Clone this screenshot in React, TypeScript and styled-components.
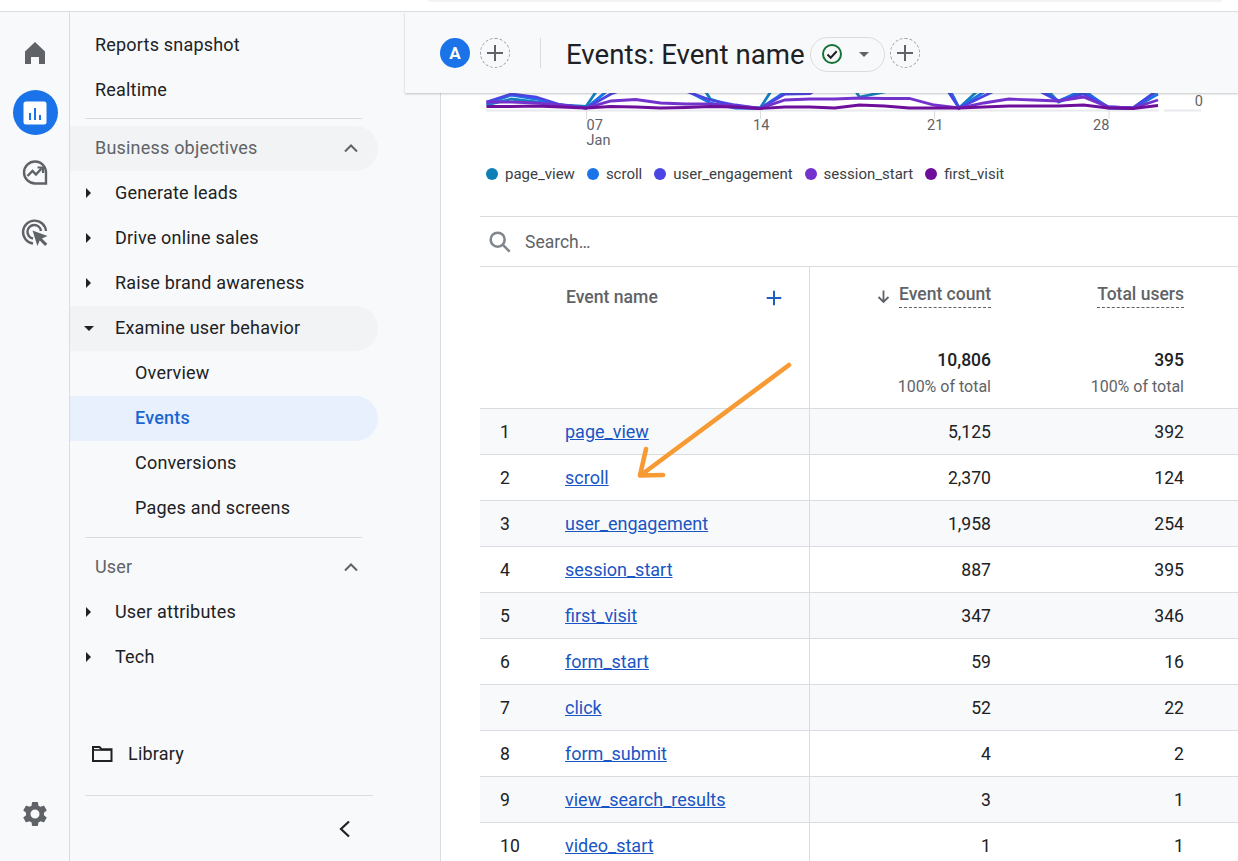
import React from "react";
import styled, { createGlobalStyle } from "styled-components";

const Global = createGlobalStyle`
  html, body { margin: 0; padding: 0; height: 100%; overflow: hidden; background: #fff; }
  body { font-family: Roboto, "Liberation Sans", sans-serif; color: #202124; }
  * { box-sizing: border-box; }
`;

const Page = styled.div`
  width: 100vw;
  height: 100vh;
  display: flex;
  flex-direction: column;
  overflow: hidden;
`;
const TopStrip = styled.div`
  height: 12px;
  flex: none;
  padding: 0 16px 0 428px;
  border-bottom: 1px solid #dadce0;
  background: #fff;
`;
const TopSearch = styled.div`
  height: 2px;
  background: #f1f3f4;
  border-radius: 0 0 4px 4px;
`;
const Body = styled.div`
  flex: 1;
  display: flex;
  min-height: 0;
  overflow: hidden;
`;
const Rail = styled.nav`
  width: 70px;
  flex: none;
  background: #f8f9fa;
  border-right: 1px solid #dadce0;
  display: flex;
  flex-direction: column;
  align-items: center;
  padding-top: 18px;
  padding-left: 1px;
`;
const RailSlot = styled.div<{ $active?: boolean }>`
  width: 45px;
  height: 45px;
  margin-bottom: 15px;
  display: flex;
  align-items: center;
  justify-content: center;
  border-radius: 50%;
  background: ${(p) => (p.$active ? "#1a73e8" : "transparent")};
`;
const RailSpacer = styled.div`
  flex: 1;
`;
const RailBottom = styled.div`
  height: 45px;
  margin-bottom: 25px;
  display: flex;
  align-items: center;
`;
const Sidebar = styled.aside`
  width: 371px;
  flex: none;
  background: #f8f9fa;
  border-right: 1px solid #dadce0;
  padding-top: 11px;
  padding-right: 62px;
  display: flex;
  flex-direction: column;
`;
const NavRow = styled.div<{ $depth?: number; $pill?: "grey" | "blue"; $muted?: boolean }>`
  height: 45px;
  flex: none;
  display: flex;
  align-items: center;
  position: relative;
  padding: 0 20px 2px ${(p) => 25 + (p.$depth ?? 0) * 20}px;
  font-size: 18px;
  letter-spacing: 0.2px;
  color: ${(p) => (p.$pill === "blue" ? "#1a67d2" : p.$muted ? "#5f6368" : "#202124")};
  font-weight: ${(p) => (p.$pill === "blue" ? 500 : 400)};
  border-radius: 0 23px 23px 0;
  width: 308px;
  background: ${(p) => (p.$pill === "grey" ? "#f1f3f4" : p.$pill === "blue" ? "#e8f0fe" : "transparent")};
`;
const Caret = styled.span<{ $open?: boolean }>`
  position: absolute;
  left: 16px;
  top: 50%;
  width: 0;
  height: 0;
  ${(p) =>
    p.$open
      ? `margin-top:-3px;margin-left:-2px;border-left:5px solid transparent;border-right:5px solid transparent;border-top:5px solid #202124;`
      : `margin-top:-6px;border-top:5px solid transparent;border-bottom:5px solid transparent;border-left:5px solid #202124;`}
`;
const Chevron = styled.svg`
  margin-left: auto;
  margin-right: -1px;
`;
const NavDivider = styled.div`
  height: 1px;
  flex: none;
  background: #dadce0;
  margin: 5px 0 7px 15px;
  width: 277px;
`;
const SectionDivider = styled(NavDivider)`
  margin: 6px 0 7px 15px;
`;
const WideDivider = styled(NavDivider)`
  margin: 18px 0 0 15px;
  width: 288px;
`;
const LibraryRow = styled.div`
  height: 45px;
  flex: none;
  margin-top: 52px;
  padding: 0 0 2px 21px;
  display: flex;
  align-items: center;
  gap: 15px;
  font-size: 18px;
  letter-spacing: 0.2px;
`;
const BottomRow = styled.div`
  width: 288px;
  margin-left: 15px;
  display: flex;
  justify-content: flex-end;
  padding: 23px 21px 0 0;
`;
const Main = styled.main`
  flex: 1;
  min-width: 0;
  position: relative;
  background: #fff;
  display: flex;
  flex-direction: column;
`;
const Header = styled.header`
  height: 81px;
  flex: none;
  margin-left: -36px;
  padding-left: 35px;
  position: relative;
  z-index: 2;
  background: #f8f9fa;
  box-shadow: 0 1px 2px rgba(60, 64, 67, 0.3);
  display: flex;
  align-items: center;
`;
const Avatar = styled.div`
  width: 30px;
  height: 30px;
  flex: none;
  margin-right: 10px;
  border-radius: 50%;
  background: #1a73e8;
  color: #fff;
  font-weight: 700;
  font-size: 17px;
  display: flex;
  align-items: center;
  justify-content: center;
`;
const AddCircle = styled.div`
  width: 30px;
  height: 30px;
  border-radius: 50%;
  border: 1px dashed #9aa0a6;
  display: flex;
  align-items: center;
  justify-content: center;
  flex: none;
`;
const VSep = styled.div`
  width: 1px;
  height: 30px;
  flex: none;
  background: #dadce0;
  margin: 0 25px 0 30px;
`;
const Title = styled.h1`
  margin: 3px 5px 0 0;
  font-size: 27.6px;
  font-weight: 400;
  color: #202124;
  white-space: nowrap;
`;
const Chip = styled.div`
  width: 75px;
  height: 35px;
  flex: none;
  margin: 3px 5px 0 0;
  border: 1px solid #dadce0;
  border-radius: 18px;
  display: flex;
  align-items: center;
  padding-left: 10px;
  gap: 16px;
`;
const ChipCaret = styled.span`
  width: 0;
  height: 0;
  border-left: 5.5px solid transparent;
  border-right: 5.5px solid transparent;
  border-top: 5.5px solid #5f6368;
`;
const ChartBlock = styled.section`
  height: 123px;
  flex: none;
  position: relative;
  display: flex;
  flex-direction: column;
`;
const ChartSvg = styled.svg`
  display: block;
  flex: none;
  font-family: Roboto, "Liberation Sans", sans-serif;
`;
const Legend = styled.div`
  display: flex;
  align-items: center;
  padding-left: 45px;
  margin-top: 9px;
  font-size: 15px;
  color: #3c4043;
`;
const LegendItem = styled.div`
  display: flex;
  align-items: center;
  gap: 7px;
  margin-right: 12px;
`;
const Dot = styled.span<{ $c: string }>`
  width: 12px;
  height: 12px;
  border-radius: 50%;
  background: ${(p) => p.$c};
`;
const TableWrap = styled.section`
  margin-left: 39px;
  border-top: 1px solid #dadce0;
  flex: none;
`;
const SearchRow = styled.div`
  height: 50px;
  display: flex;
  align-items: center;
  gap: 11px;
  padding-left: 6px;
  border-bottom: 1px solid #dadce0;
  font-size: 17.5px;
  color: #5f6368;
`;
const grid = `
  display: grid;
  grid-template-columns: 85px 245px 193px 193px 1fr;
`;
const HeadRow = styled.div`
  ${grid}
  height: 142px;
  border-bottom: 1px solid #dadce0;
`;
const HeadName = styled.div`
  border-right: 1px solid #dadce0;
  display: flex;
  justify-content: space-between;
  padding: 21px 25px 0 1px;
  font-size: 17.6px;
  font-weight: 500;
  color: #5f6368;
  align-items: flex-start;
  line-height: 19px;
`;
const HeadMetric = styled.div`
  display: flex;
  flex-direction: column;
  align-items: flex-end;
  padding: 18px 12px 0 0;
`;
const MetricTitle = styled.div`
  display: flex;
  align-items: center;
  gap: 7px;
  font-size: 17.5px;
  font-weight: 500;
  color: #5f6368;
`;
const Dashed = styled.span`
  border-bottom: 1px dashed #5f6368;
  line-height: 19px;
  padding-bottom: 3px;
`;
const Total = styled.div`
  margin-top: 42px;
  font-size: 17.5px;
  font-weight: 500;
  color: #202124;
  line-height: 20px;
`;
const TotalSub = styled.div`
  margin-top: 7px;
  font-size: 16px;
  color: #5f6368;
  line-height: 20px;
`;
const Row = styled.div<{ $odd: boolean }>`
  ${grid}
  height: 46px;
  border-bottom: 1px solid #dadce0;
  background: ${(p) => (p.$odd ? "#f8f9fa" : "#fff")};
  align-items: center;
  font-size: 17.6px;
  color: #202124;
`;
const RowIdx = styled.div`
  padding-left: 20px;
`;
const RowName = styled.div`
  height: 100%;
  display: flex;
  align-items: center;
  border-right: 1px solid #dadce0;
`;
const EventLink = styled.a`
  color: #1a55c4;
  text-decoration: underline;
  font-size: 18px;
`;
const Num = styled.div`
  text-align: right;
  padding-right: 12px;
`;
const ArrowOverlay = styled.svg`
  position: absolute;
  left: 0;
  top: 0;
  pointer-events: none;
  z-index: 1;
`;

const X = (i: number) => 486.5 + 24.87 * i;
const toPts = (a: number[]) => a.map((y, i) => `${X(i).toFixed(1)},${y}`).join(" ");

const series: [string, number[]][] = [
  ["#1380bd", [105, 99, 102, 105, 106.5, 70, 70, 60, 60, 99, 107, 108, 70, 60, 60, 97, 92, 60, 60, 108, 85, 70, 75, 102, 92, 107, 108, 90]],
  ["#1a73e8", [104, 95, 99, 105, 108, 88, 70, 60, 90, 103, 108, 108.5, 92, 80, 70, 70, 70, 60, 60, 108, 92, 85, 85, 101, 90, 108, 108.5, 94]],
  ["#4b45e4", [102, 94, 97, 105, 108, 94, 85, 85, 91, 100, 105, 108.5, 94, 93.5, 80, 70, 70, 60, 70, 108, 96, 84, 88, 101, 94, 107, 108, 90]],
  ["#7432cc", [102, 102, 103, 105, 108, 101, 99.5, 103, 104, 104, 106, 108.5, 100, 99, 99, 98, 98.5, 98.5, 105, 108, 103, 99, 100, 101, 97, 107, 108, 100]],
  ["#6e0f9c", [106.5, 106.5, 106, 107, 108, 106.5, 107, 108, 107.5, 106.5, 107, 108.5, 107, 107, 108, 105, 106, 108, 108, 108, 107, 106, 106, 106, 105, 108, 108.5, 105.5]],
];
const legend: [string, string][] = [
  ["page_view", "#0f7fb8"],
  ["scroll", "#1a73e8"],
  ["user_engagement", "#4b45e4"],
  ["session_start", "#7432cc"],
  ["first_visit", "#6e0f9c"],
];
const rows: [string, string, string][] = [
  ["page_view", "5,125", "392"],
  ["scroll", "2,370", "124"],
  ["user_engagement", "1,958", "254"],
  ["session_start", "887", "395"],
  ["first_visit", "347", "346"],
  ["form_start", "59", "16"],
  ["click", "52", "22"],
  ["form_submit", "4", "2"],
  ["view_search_results", "3", "1"],
  ["video_start", "1", "1"],
];

const Plus = ({ c = "#5f6368", s = 22, w = 2 }: { c?: string; s?: number; w?: number }) => (
  <svg width={s} height={s} viewBox="0 0 22 22">
    <path d="M11 3v16M3 11h16" stroke={c} strokeWidth={w} fill="none" />
  </svg>
);
const Up = () => (
  <Chevron width="16" height="10" viewBox="0 0 16 10">
    <path d="M2 8.5 8 2.5l6 6" stroke="#5f6368" strokeWidth="2" fill="none" />
  </Chevron>
);

export default function App() {
  return (
    <Page>
      <Global />
      <TopStrip>
        <TopSearch />
      </TopStrip>
      <Body>
        <Rail>
          <RailSlot>
            <svg width="22" height="24" viewBox="0 0 22 24">
              <path fill="#5f6368" d="M11 1 21 10.5V23h-6v-7H7v7H1V10.5z" />
            </svg>
          </RailSlot>
          <RailSlot $active>
            <svg width="26" height="26" viewBox="0 0 26 26">
              <rect x="1.5" y="1.5" width="23" height="23" rx="2.5" fill="#fff" />
              <path d="M8 13v7M13 8v12M18 15v5" stroke="#1a73e8" strokeWidth="2" fill="none" />
            </svg>
          </RailSlot>
          <RailSlot>
            <svg width="28" height="28" viewBox="0 0 28 28">
              <path d="M25 24.5h-11A11 11 0 1 1 25 14z" fill="none" stroke="#5f6368" strokeWidth="2.4" />
              <path d="M6.5 17l5-5 3.5 3.5 5.5-6" fill="none" stroke="#5f6368" strokeWidth="2.4" />
              <path d="M16.5 8.5h5.5v5.5" fill="none" stroke="#5f6368" strokeWidth="2.2" />
            </svg>
          </RailSlot>
          <RailSlot>
            <svg width="28" height="28" viewBox="0 0 28 28">
              <path d="M12 24.5A11.5 11.5 0 1 1 25 12" fill="none" stroke="#5f6368" strokeWidth="2.4" />
              <path d="M12 19.5A6.8 6.8 0 1 1 20 12" fill="none" stroke="#5f6368" strokeWidth="2.4" />
              <path fill="#5f6368" d="M11.5 11.5l15 5.5-5.6 2.4 5.4 5.4-2.2 2.2-5.4-5.4-2.3 5.5z" />
            </svg>
          </RailSlot>
          <RailSpacer />
          <RailBottom>
            <svg width="30" height="30" viewBox="0 0 24 24">
              <path
                fill="#5f6368"
                d="M19.14 12.94c.04-.3.06-.61.06-.94s-.02-.64-.07-.94l2.03-1.58a.49.49 0 0 0 .12-.61l-1.92-3.32a.49.49 0 0 0-.59-.22l-2.39.96c-.5-.38-1.03-.7-1.62-.94l-.36-2.54a.48.48 0 0 0-.48-.41h-3.84a.48.48 0 0 0-.47.41l-.36 2.54c-.59.24-1.13.57-1.62.94l-2.39-.96a.48.48 0 0 0-.59.22L2.74 8.87a.48.48 0 0 0 .12.61l2.03 1.58c-.05.3-.09.63-.09.94s.02.64.07.94l-2.03 1.58a.49.49 0 0 0-.12.61l1.92 3.32c.12.22.37.29.59.22l2.39-.96c.5.38 1.03.7 1.62.94l.36 2.54c.05.24.24.41.48.41h3.84c.24 0 .44-.17.47-.41l.36-2.54c.59-.24 1.13-.56 1.62-.94l2.39.96c.22.08.47 0 .59-.22l1.92-3.32a.48.48 0 0 0-.12-.61l-2.01-1.58zM12 15.6A3.6 3.6 0 1 1 12 8.4a3.6 3.6 0 0 1 0 7.2z"
              />
            </svg>
          </RailBottom>
        </Rail>
        <Sidebar>
          <NavRow>Reports snapshot</NavRow>
          <NavRow>Realtime</NavRow>
          <NavDivider />
          <NavRow $pill="grey" $muted>
            Business objectives
            <Up />
          </NavRow>
          <NavRow $depth={1}><Caret />Generate leads</NavRow>
          <NavRow $depth={1}><Caret />Drive online sales</NavRow>
          <NavRow $depth={1}><Caret />Raise brand awareness</NavRow>
          <NavRow $depth={1} $pill="grey"><Caret $open />Examine user behavior</NavRow>
          <NavRow $depth={2}>Overview</NavRow>
          <NavRow $depth={2} $pill="blue">Events</NavRow>
          <NavRow $depth={2}>Conversions</NavRow>
          <NavRow $depth={2}>Pages and screens</NavRow>
          <SectionDivider />
          <NavRow $muted>
            User
            <Up />
          </NavRow>
          <NavRow $depth={1}><Caret />User attributes</NavRow>
          <NavRow $depth={1}><Caret />Tech</NavRow>
          <LibraryRow>
            <svg width="22" height="18" viewBox="0 0 22 18">
              <path d="M2 2h6.5l2 2.2H20.5V16H2z" fill="none" stroke="#202124" strokeWidth="2" />
              <path d="M2 5h18.5" stroke="#202124" strokeWidth="1.6" />
            </svg>
            Library
          </LibraryRow>
          <WideDivider />
          <BottomRow>
            <svg width="14" height="20" viewBox="0 0 14 20">
              <path d="M11 2.5 3 10l8 7.5" stroke="#202124" strokeWidth="2.2" fill="none" />
            </svg>
          </BottomRow>
        </Sidebar>
        <Main>
          <Header>
            <Avatar>A</Avatar>
            <AddCircle><Plus /></AddCircle>
            <VSep />
            <Title>Events: Event name</Title>
            <Chip>
              <svg width="22" height="22" viewBox="0 0 22 22">
                <circle cx="11" cy="11" r="9" fill="none" stroke="#137333" strokeWidth="2" />
                <path d="M6.5 11.5l3.2 3.2 6-6.5" fill="none" stroke="#202124" strokeWidth="2" />
              </svg>
              <ChipCaret />
            </Chip>
            <AddCircle><Plus /></AddCircle>
          </Header>
          <ChartBlock>
            <ChartSvg width="797" height="63" viewBox="441 93 797 63">
              <path d="M486 110.5H1159M1164 110.5H1201" stroke="#e8eaed" strokeWidth="2" />
              <path d="M586.5 111v8M760.5 111v8M934.5 111v8M1109 111v8" stroke="#dadce0" strokeWidth="1" />
              {series.map(([c, a]) => (
                <polyline key={c} points={toPts(a)} fill="none" stroke={c} strokeWidth="2.8" strokeLinejoin="miter" />
              ))}
              <g fontSize="14.5" fill="#5f6368">
                <text x="586.5" y="130">07</text>
                <text x="586.5" y="145">Jan</text>
                <text x="753" y="130">14</text>
                <text x="927" y="130">21</text>
                <text x="1093" y="130">28</text>
                <text x="1203" y="106" textAnchor="end">0</text>
              </g>
            </ChartSvg>
            <Legend>
              {legend.map(([t, c]) => (
                <LegendItem key={t}>
                  <Dot $c={c} />
                  {t}
                </LegendItem>
              ))}
            </Legend>
          </ChartBlock>
          <TableWrap>
            <SearchRow>
              <svg width="28" height="28" viewBox="0 0 24 24">
                <path fill="none" stroke="#80868b" strokeWidth="2.2" d="M10 4a6 6 0 1 1 0 12 6 6 0 0 1 0-12zM14.3 14.3l6 6" />
              </svg>
              Search…
            </SearchRow>
            <HeadRow>
              <div />
              <HeadName>
                Event name
                <Plus c="#1a5fc4" s={20} w={2.2} />
              </HeadName>
              <HeadMetric>
                <MetricTitle>
                  <svg width="17" height="17" viewBox="0 0 17 17">
                    <path d="M8.5 2.5v11M3.5 9l5 5 5-5" fill="none" stroke="#5f6368" strokeWidth="1.8" />
                  </svg>
                  <Dashed>Event count</Dashed>
                </MetricTitle>
                <Total>10,806</Total>
                <TotalSub>100% of total</TotalSub>
              </HeadMetric>
              <HeadMetric>
                <MetricTitle>
                  <Dashed>Total users</Dashed>
                </MetricTitle>
                <Total>395</Total>
                <TotalSub>100% of total</TotalSub>
              </HeadMetric>
            </HeadRow>
            {rows.map(([n, a, b], i) => (
              <Row key={n} $odd={i % 2 === 0}>
                <RowIdx>{i + 1}</RowIdx>
                <RowName><EventLink>{n}</EventLink></RowName>
                <Num>{a}</Num>
                <Num>{b}</Num>
              </Row>
            ))}
          </TableWrap>
          <ArrowOverlay width="797" height="849" viewBox="441 12 797 849">
            <path
              d="M789 365 641 475M646 449l-6 26.5 23-.5"
              fill="none"
              stroke="#f79a33"
              strokeWidth="4.6"
              strokeLinecap="round"
              strokeLinejoin="round"
            />
          </ArrowOverlay>
        </Main>
      </Body>
    </Page>
  );
}
